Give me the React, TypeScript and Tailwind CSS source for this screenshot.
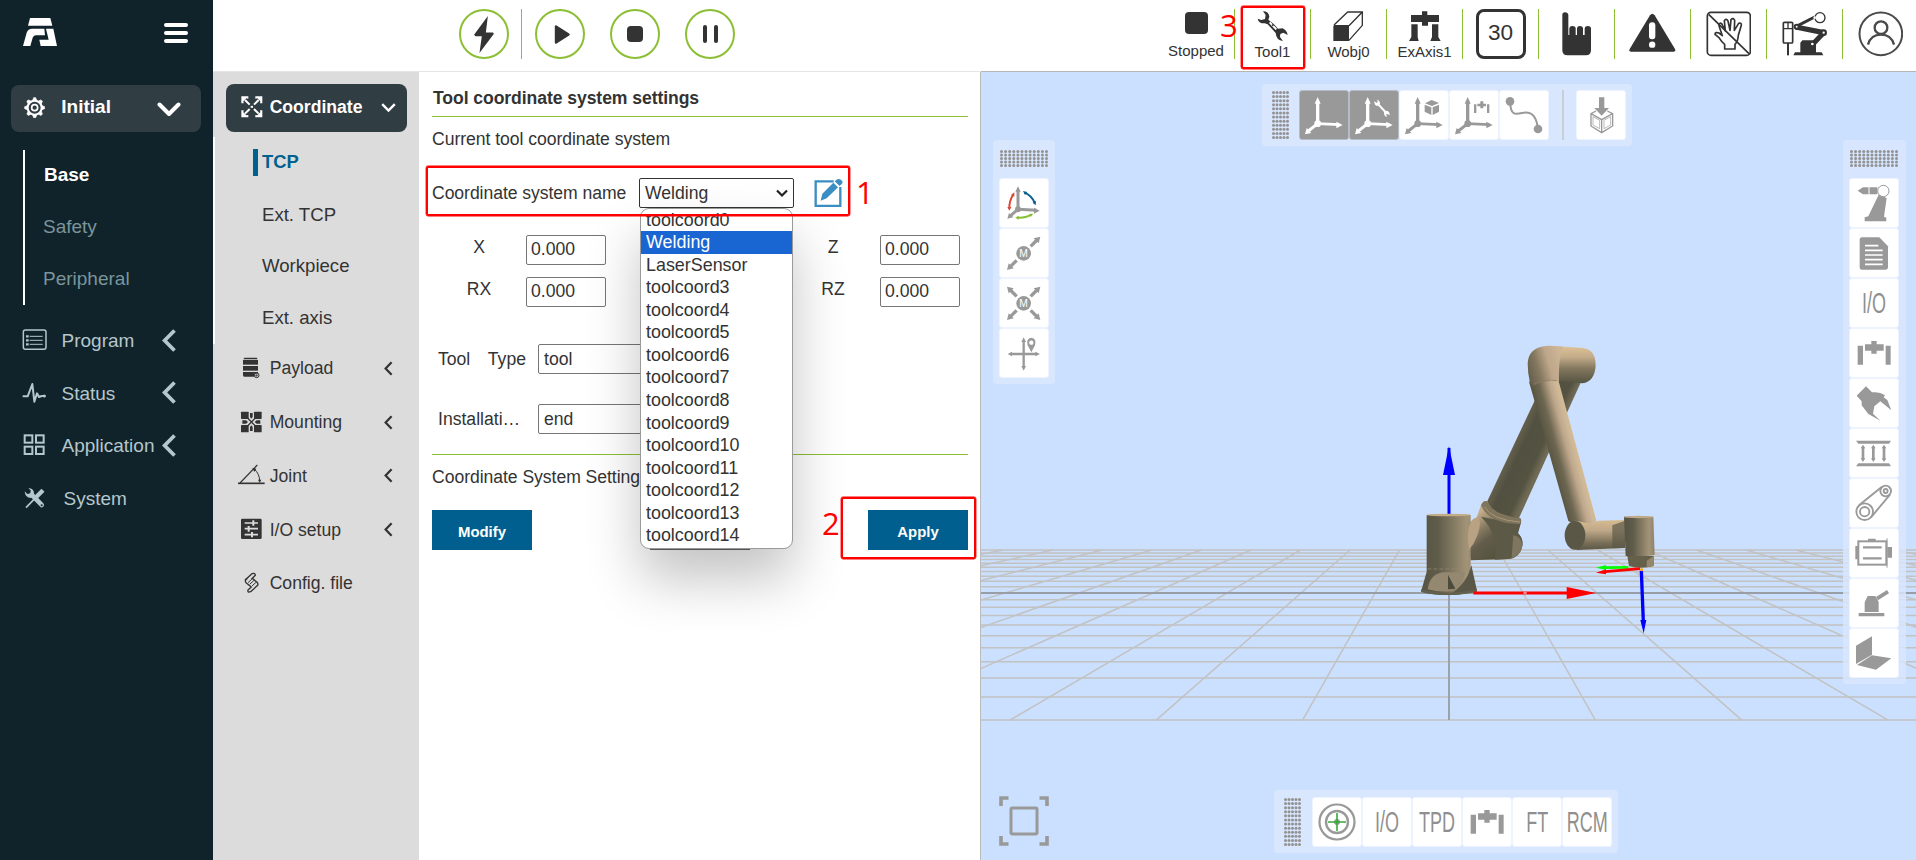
import React from "react";

type P = { children?: React.ReactNode };

const DARK = "#333333";
const GREY = "#999999";

function Ico({ box, className = "", children }: P & { box: [number, number, number, number]; className?: string }) {
  return (
    <svg className={`shrink-0 ${className}`} width={box[2] / 3} height={box[3] / 3} viewBox={box.join(" ")} fill="none">
      {children}
    </svg>
  );
}

/* ---------- navigation icons ---------- */

function Logo() {
  return (
    <Ico box={[69, 54, 102, 84]}>
      <g fill="#fff">
        <path d="M90 54H151L157 77H84Z" />
        <path d="M69 138L80 98Q84 86 97 86H133L135 106H108Q101 106 98 113L91 138Z" />
        <path d="M138 86H160L171 138H122L118 119H146Z" />
      </g>
    </Ico>
  );
}

function Gear() {
  return (
    <Ico box={[72, 290, 64, 64]}>
      <g stroke="#fff">
        <circle cx="104" cy="322" r="21" strokeWidth="6" />
        <circle cx="104" cy="322" r="9" strokeWidth="5" />
        {[0, 45, 90, 135, 180, 225, 270, 315].map((a) => (
          <path key={a} d="M98 300L101 292H107L110 300Z" fill="#fff" strokeWidth="2" transform={`rotate(${a} 104 322)`} />
        ))}
      </g>
    </Ico>
  );
}

const navIcons = {
  program: (
    <Ico box={[67, 89, 75, 65]}>
      <rect x="71" y="92" width="68" height="58" rx="6" stroke="#b5c7cd" strokeWidth="4.500" />
      <path d="M79 111H87M79 123H87M79 135H87" stroke="#b5c7cd" strokeWidth="7" />
      <path d="M90 111H129M90 123H129M90 135H129" stroke="#b5c7cd" strokeWidth="3" />
    </Ico>
  ),
  status: (
    <Ico box={[67, 248, 75, 65]}>
      <path d="M69 291H84L98 254L104 307L112 282L118 293L126 290H137" stroke="#b5c7cd" strokeWidth="6" strokeLinejoin="round" />
      <circle cx="134" cy="290" r="4.500" fill="#b5c7cd" />
    </Ico>
  ),
  application: (
    <Ico box={[67, 404, 75, 65]}>
      <g stroke="#b5c7cd" strokeWidth="6">
        <rect x="75" y="408" width="23" height="22" />
        <rect x="109" y="408" width="23" height="22" />
        <rect x="75" y="442" width="23" height="22" />
        <rect x="109" y="442" width="23" height="22" />
      </g>
    </Ico>
  ),
  system: (
    <Ico box={[67, 563, 75, 65]}>
      <path d="M98 588L126 617" stroke="#b5c7cd" strokeWidth="14" strokeLinecap="round" />
      <path d="M79 625L106 597" stroke="#b5c7cd" strokeWidth="5" />
      <path d="M103 600L130 573" stroke="#b5c7cd" strokeWidth="13" />
      <path d="M75 576L83 584L92 582L93 573L86 567Q98 566 102 576L104 590L94 596Q76 596 75 576Z" fill="#b5c7cd" />
      <circle cx="126" cy="618" r="3" fill="#10232a" />
    </Ico>
  ),
};

function ChevLeft({ small = false }: { small?: boolean }) {
  return small ? (
    <svg width="9" height="15" viewBox="0 0 9 15" fill="none">
      <path d="M7.6 1.2L1.6 7.5L7.6 13.8" stroke={DARK} strokeWidth="2.2" />
    </svg>
  ) : (
    <svg width="14" height="23" viewBox="0 0 14 23" fill="none">
      <path d="M12.5 1.5L2.6 11.5L12.5 21.5" stroke="#b5c7cd" strokeWidth="3.8" />
    </svg>
  );
}

function Sidebar() {
  const rows: [string, React.ReactNode, boolean][] = [
    ["Program", navIcons.program, true],
    ["Status", navIcons.status, true],
    ["Application", navIcons.application, true],
    ["System", navIcons.system, false],
  ];
  return (
    <nav className="flex h-full w-[213px] shrink-0 flex-col bg-[#10232a] text-[19px] text-[#b5c7cd]">
      <div className="flex h-[85px] items-start justify-between pl-[23px] pr-[25px] pt-[18px]">
        <Logo />
        <div className="mt-[5px] flex w-6 flex-col gap-1">
          <span className="h-1 rounded-full bg-white" />
          <span className="h-1 rounded-full bg-white" />
          <span className="h-1 rounded-full bg-white" />
        </div>
      </div>
      <div className="ml-[11px] flex h-[47px] w-[190px] items-center rounded-lg bg-[#303d43] pb-[2px] pl-[13px] font-bold text-white">
        <Gear />
        <span className="ml-[16px]">Initial</span>
        <svg className="ml-auto mr-[20px] mt-[4px]" width="24" height="15" viewBox="0 0 24 15" fill="none">
          <path d="M2.5 2.5L12 12L21.5 2.5" stroke="#fff" strokeWidth="4" strokeLinecap="round" strokeLinejoin="round" />
        </svg>
      </div>
      <div className="ml-[23px] mt-[18px] flex h-[155px] flex-col border-l-2 border-white pl-[18px] text-[#7b959d]">
        <div className="flex h-[52px] shrink-0 items-center pb-px pl-px font-bold text-white">Base</div>
        <div className="flex h-[52px] shrink-0 items-center pb-px">Safety</div>
        <div className="flex h-[52px] shrink-0 items-center pb-px">Peripheral</div>
      </div>
      <div className="mt-[9px] flex flex-col">
        {rows.map(([name, icon, more]) => (
          <div key={name} className="flex h-[52.5px] items-center pl-[22px] pr-[37px]">
            {icon}
            <span className={more ? "ml-[14.5px] pt-[2px]" : "ml-[16.5px] pt-[2px]"}>{name}</span>
            {more && <span className="ml-auto">{<ChevLeft />}</span>}
          </div>
        ))}
      </div>
    </nav>
  );
}

/* ---------- second level menu ---------- */

const menuIcons = {
  payload: (
    <Ico box={[714, 170, 80, 66]}>
      <g fill={DARK}>
        <path d="M733 172H770L773 177H730Z" />
        <rect x="729" y="179" width="45" height="14" />
        <rect x="729" y="197" width="45" height="14" />
        <path d="M729 215H774V219H764V229H733Q729 229 729 225Z" />
      </g>
      <circle cx="770" cy="225" r="7" stroke={DARK} strokeWidth="3" />
      <path d="M765 225H775M770 220V230" stroke={DARK} strokeWidth="2" />
    </Ico>
  ),
  mounting: (
    <Ico box={[714, 332, 80, 66]}>
      <g fill={DARK}>
        <rect x="723" y="334" width="23" height="22" rx="2" />
        <rect x="762" y="334" width="23" height="22" rx="2" />
        <rect x="723" y="374" width="23" height="22" rx="2" />
        <rect x="762" y="374" width="23" height="22" rx="2" />
        <path d="M750 338H758V350L754 355L750 350ZM750 392H758V380L754 375L750 380ZM727 360H738L744 365L738 370H727ZM781 360H770L764 365L770 370H781Z" />
      </g>
      <path d="M742 352L767 378M767 352L742 378" stroke={DARK} strokeWidth="4" />
    </Ico>
  ),
  joint: (
    <Ico box={[714, 494, 80, 66]}>
      <path d="M714 552H794" stroke={DARK} strokeWidth="5" />
      <path d="M720 551L772 497" stroke={DARK} strokeWidth="3.5" />
      <path d="M762 508Q780 525 779 547" stroke={DARK} strokeWidth="3" />
      <path d="M757 506L769 508L763 518ZM774 541H784L779 550Z" fill={DARK} />
    </Ico>
  ),
  io: (
    <Ico box={[714, 656, 80, 66]}>
      <rect x="723" y="658" width="62" height="61" rx="4" fill={DARK} />
      <path d="M734 671H774M734 688H774M734 706H774" stroke="#dcdcdc" strokeWidth="5" />
      <path d="M760 663V679M746 680V697M756 698V714" stroke="#dcdcdc" strokeWidth="6" />
    </Ico>
  ),
  config: (
    <Ico box={[714, 815, 80, 66]}>
      <g stroke={DARK} strokeWidth="4" strokeLinejoin="round" strokeLinecap="round">
        <path d="M741 835Q733 840 738 847L754 860L744 869Q742 878 752 874L773 855Q776 849 769 844L757 834" />
        <path d="M736 838L756 820Q766 817 766 825L755 836" />
        <path d="M745 846L754 838M750 851L761 841M757 856L767 847" strokeWidth="3" />
      </g>
    </Ico>
  ),
};

function SubMenu() {
  const rows: [string, React.ReactNode, boolean][] = [
    ["Payload", menuIcons.payload, true],
    ["Mounting", menuIcons.mounting, true],
    ["Joint", menuIcons.joint, true],
    ["I/O setup", menuIcons.io, true],
    ["Config. file", menuIcons.config, false],
  ];
  return (
    <nav className="flex w-[206px] shrink-0 flex-col bg-[#dcdcdc] text-[17.6px] text-[#333]">
      <div className="ml-[13px] mt-3 flex h-[48px] w-[181px] items-center rounded-lg bg-[#303d43] pb-0.5 pl-[15px] font-bold text-white">
        <Ico box={[722, 290, 65, 65]}>
          <path d="M734 302L748 316M775 302L761 316M734 343L748 329M775 343L761 329" stroke="#fff" strokeWidth="6" />
          <path
            d="M723 291H744V298L738 297L729 306L730 312H723ZM786 291H765V298L771 297L780 306L779 312H786ZM723 354H744V347L738 348L729 339L730 333H723ZM786 354H765V347L771 348L780 339L779 333H786Z"
            fill="#fff"
          />
          <path d="M751 322.500H758" stroke="#fff" strokeWidth="6" />
        </Ico>
        <span className="ml-[7px]">Coordinate</span>
        <svg className="ml-auto mr-[11px] mt-0.5" width="15" height="10" viewBox="0 0 15 10" fill="none">
          <path d="M1.2 1.2L7.5 7.6L13.8 1.2" stroke="#fff" strokeWidth="2.4" />
        </svg>
      </div>
      <div className="mt-[5px] flex h-[207px] flex-col border-l-2 border-white pl-[47px] text-[18.6px]">
        <div className="flex h-[51.75px] items-center text-[18.4px] font-bold text-[#00618f]">
          <span className="-ml-[9px] mr-[4px] h-[27px] w-[5px] bg-[#00618f]" />
          <span className="pb-[2px]">TCP</span>
        </div>
        <div className="flex h-[51.75px] items-center">Ext. TCP</div>
        <div className="flex h-[51.75px] items-center">Workpiece</div>
        <div className="flex h-[51.75px] items-center">Ext. axis</div>
      </div>
      <div className="flex flex-col">
        {rows.map(([name, icon, more]) => (
          <div key={name} className="flex h-[53.8px] items-center pb-[6px] pl-[25px] pr-[26.5px]">
            {icon}
            <span className="ml-[5px] pt-px">{name}</span>
            {more && <span className="ml-auto mt-px">{<ChevLeft small />}</span>}
          </div>
        ))}
      </div>
    </nav>
  );
}

/* ---------- top bar ---------- */

function Round({ children }: P) {
  return (
    <div className="flex h-[50px] w-[50px] items-center justify-center rounded-full border-2 border-[#8cbf34]">{children}</div>
  );
}

function Cell({ children, first = false }: P & { first?: boolean }) {
  return (
    <div className={`flex h-[50px] w-[76px] flex-col items-center ${first ? "" : "border-l border-[#8cbf34]"}`}>{children}</div>
  );
}

function TopBar() {
  return (
    <header className="flex h-[71px] items-start bg-white pt-[9px] text-[15px] text-[#333]">
      <div className="ml-[246px] flex items-center">
        <Round>
          <svg width="20" height="37" viewBox="193 47 59 110">
            <path d="M234 47L193 103L197 107H216L209 157L252 100L249 96H228Z" fill={DARK} />
          </svg>
        </Round>
        <span className="ml-3 mr-[13px] h-[50px] w-px bg-[#8cbf34]" />
        <Round>
          <svg className="ml-1" width="16" height="19" viewBox="0 0 16 19">
            <path d="M2 1.5L14.5 9.5L2 17.5Z" fill={DARK} stroke={DARK} strokeWidth="2.4" strokeLinejoin="round" />
          </svg>
        </Round>
        <span className="w-[25px]" />
        <Round>
          <span className="h-4 w-4 rounded-sm bg-[#333]" />
        </Round>
        <span className="w-[25px]" />
        <Round>
          <span className="flex gap-[7px]">
            <span className="h-[18px] w-1 rounded-full bg-[#333]" />
            <span className="h-[18px] w-1 rounded-full bg-[#333]" />
          </span>
        </Round>
      </div>
      <div className="-mr-[2px] ml-auto flex leading-[17px]">
        <Cell first>
          <span className="mt-[3px] h-[23px] w-[23px] rounded-[4px] bg-[#333]" />
          <span className="mt-[8px]">Stopped</span>
        </Cell>
        <Cell>
          <Ico box={[348, 32, 98, 93]} className="mt-[2px]">
            <path
              d="M369 33Q386 33 388 49L385 58L402 72L414 85L428 84Q441 90 443 104L430 97L421 101L420 110L429 122Q409 121 407 98L383 72L374 69Q356 70 353 55L364 59L375 56L377 44Z"
              fill={DARK}
            />
            <path d="M389 66L409 87" stroke="#fff" strokeWidth="6" />
            <circle cx="398" cy="75" r="3" fill={DARK} />
          </Ico>
          <span className="mt-px">Tool1</span>
        </Cell>
        <Cell>
          <Ico box={[580, 32, 93, 93]} className="mt-[2px]">
            <path d="M583 74L624 35H668V75L628 120M583 76H628M628 76L668 35" stroke={DARK} strokeWidth="4" />
            <rect x="581" y="76" width="47" height="46" fill={DARK} />
          </Ico>
          <span className="mt-px">Wobj0</span>
        </Cell>
        <Cell>
          <Ico box={[806, 32, 96, 93]} className="mt-[2px]">
            <path d="M812 44H845V33H861V44H896V65H863V76H845V65H812ZM813 72H832V110L835 122H806L813 110ZM875 72H894V110L901 122H870L875 110Z" fill={DARK} />
          </Ico>
          <span className="mt-px">ExAxis1</span>
        </Cell>
        <Cell>
          <span className="flex h-[50px] w-[50px] items-center justify-center rounded-lg border-[3px] border-[#333] pb-[3px] text-[22.6px]">
            30
          </span>
        </Cell>
        <Cell>
          <Ico box={[138, 35, 88, 131]} className="mt-[3px]">
            <path
              d="M139 44Q139 36 147 36Q156 36 157 44V104H160V84Q161 77 169 77Q178 77 179 84V104H183V84Q184 77 191 77Q200 77 201 84V104H206V84Q207 77 215 77Q224 77 225 84V150Q225 165 210 165H154Q139 165 139 150Z"
              fill={DARK}
            />
          </Ico>
        </Cell>
        <Cell>
          <Ico box={[340, 40, 140, 117]} className="mt-[4px]">
            <path d="M403 47Q410 37 417 47L478 148Q481 156 474 156H346Q339 156 342 148Z" fill={DARK} />
            <rect x="400" y="68" width="19" height="51" rx="9" fill="#fff" />
            <circle cx="409.500" cy="135" r="9.500" fill="#fff" />
          </Ico>
        </Cell>
        <Cell>
          <Ico box={[569, 32, 137, 137]} className="mt-[2px]">
            <g stroke={DARK} strokeWidth="5" strokeLinejoin="round">
              <rect x="573" y="36" width="129" height="129" rx="11" />
              <path d="M625 146V132Q615 124 608 112L596 102Q597 94 608 98L618 106L608 76Q609 65 616 70L627 92L624 61Q629 53 635 62L641 90L644 58Q651 51 655 60L654 90L667 69Q676 66 675 75L666 105Q665 124 656 132V146Z" strokeWidth="5" />
              <path d="M577 42L698 160" />
            </g>
          </Ico>
        </Cell>
        <Cell>
          <Ico box={[797, 32, 137, 136]} className="mt-[2px]">
            <g stroke={DARK} fill="none">
              <rect x="801" y="66" width="28" height="62" rx="3" strokeWidth="5" />
              <path d="M801 85H829M815 66V85" strokeWidth="4" />
              <path d="M815 128V165" strokeWidth="6" />
              <circle cx="911" cy="52" r="15" strokeWidth="4" />
              <path d="M840 78L895 50" strokeWidth="9" />
              <path d="M838 80L922 97" strokeWidth="16" />
              <path d="M922 97L890 131" strokeWidth="15" />
            </g>
            <g fill={DARK}>
              <path d="M831 165L836 156H916L921 165ZM852 156V127L858 120H893L899 132V156Z" />
              <circle cx="841" cy="79" r="9" />
              <circle cx="922" cy="97" r="10" />
            </g>
            <circle cx="922" cy="97" r="3.500" fill="#fff" />
            <circle cx="841" cy="79" r="3" fill="#fff" />
            <circle cx="888" cy="131" r="4" fill="#fff" />
            <circle cx="895" cy="52" r="4" fill="#fff" />
          </Ico>
        </Cell>
        <Cell>
          <Ico box={[1025, 32, 137, 137]} className="mt-[2px]">
            <g stroke="#4a4a4a" strokeWidth="6">
              <circle cx="1093.500" cy="100.500" r="64" />
              <circle cx="1094" cy="82" r="19" strokeWidth="7" />
              <path d="M1055 133Q1063 103 1094 103Q1125 103 1133 133" strokeWidth="7" />
            </g>
          </Ico>
        </Cell>
      </div>
    </header>
  );
}

/* ---------- settings panel ---------- */

function Field({ label, value }: { label: string; value: string }) {
  return (
    <div className="flex h-[42px] items-center">
      <span className="w-[94px] pb-[6px] text-center">{label}</span>
      <span className="flex h-[30px] w-[80px] items-center rounded-[2px] border border-[#767676] bg-white pb-0.5 pl-1">{value}</span>
    </div>
  );
}

const options = ["toolcoord0", "Welding", "LaserSensor", "toolcoord3", "toolcoord4", "toolcoord5", "toolcoord6", "toolcoord7", "toolcoord8", "toolcoord9", "toolcoord10", "toolcoord11", "toolcoord12", "toolcoord13", "toolcoord14"];

function Settings() {
  return (
    <section className="relative flex w-[562px] shrink-0 flex-col border-r border-[#bbb] bg-white px-[13px] text-[17.6px] text-[#333]">
      <h1 className="mr-[-1px] flex h-[45px] w-[536px] items-center border-b border-[#8cbf34] pt-2 font-bold">
        <span className="pl-px tracking-[-0.08px]">Tool coordinate system settings</span>
      </h1>
      <div className="flex h-[44px] items-center tracking-[-0.05px]">Current tool coordinate system</div>
      <div className="flex h-[64px] items-center">
        <span className="w-[207px] tracking-[-0.06px]">Coordinate system name</span>
        <span className="flex h-[30px] w-[155px] items-center justify-between rounded-[2px] border border-[#333] pl-[5px] pr-[5px]">
          Welding
          <svg width="12" height="9" viewBox="0 0 12 9" fill="none">
            <path d="M1 1.500L6 6.500L11 1.500" stroke="#222" strokeWidth="2.200" />
          </svg>
        </span>
        <Ico box={[1213, 536, 88, 86]} className="ml-[20px]">
          <path d="M1272 543H1218V617H1292V560" stroke="#3b8ec2" strokeWidth="7" />
          <path d="M1238 580L1271 547L1285 561L1251 594L1233 601ZM1275 543L1283 537Q1291 534 1298 543Q1300 548 1296 551L1290 557Z" fill="#3b8ec2" />
        </Ico>
      </div>
      <div className="mt-1 grid w-[531px] grid-cols-3">
        <Field label="X" value="0.000" />
        <span />
        <Field label="Z" value="0.000" />
        <Field label="RX" value="0.000" />
        <span />
        <Field label="RZ" value="0.000" />
      </div>
      <div className="mt-4 flex h-[60px] items-center">
        <span className="flex w-[94px] justify-between pl-[6px]">
          <span>Tool</span>
          <span>Type</span>
        </span>
        <span className="w-[12px] shrink-0" />
        <span className="flex h-[30px] w-[177px] items-center rounded-[2px] border border-[#767676] pl-[5px]">tool</span>
      </div>
      <div className="flex h-[60px] items-center">
        <span className="w-[106px] pl-[6px]">Installati…</span>
        <span className="flex h-[30px] w-[177px] items-center rounded-[2px] border border-[#767676] pl-[5px]">end</span>
      </div>
      <div className="mt-[5px] h-px w-[536px] bg-[#8cbf34]" />
      <div className="flex h-[44px] items-center tracking-[-0.05px]">Coordinate System Settings</div>
      <div className="mt-[11px] flex w-[536px] text-[14.9px] font-bold text-white">
        <button className="h-[40px] w-[100px] bg-[#005f8e] pt-[4px]">Modify</button>
        <span className="ml-[118px] h-[40px] w-[100px] bg-[#666]" />
        <button className="ml-auto h-[40px] w-[100px] bg-[#005f8e] pt-[4px]">Apply</button>
      </div>

      <div className="absolute left-[221px] top-[136px] flex h-[341px] w-[153px] flex-col justify-end overflow-hidden rounded-[9px] border border-[#9a9a9a] bg-white pb-px text-[17.9px] shadow-[0_30px_54px_rgba(0,0,0,0.24)]">
        {options.map((o) => (
          <div
            key={o}
            className={`flex h-[22.55px] shrink-0 items-center pl-[5px] ${o === "Welding" ? "bg-[#1966d3] text-white" : ""}`}
          >
            {o}
          </div>
        ))}
      </div>
    </section>
  );
}

/* ---------- 3D viewport ---------- */

const VX = 468;
const VH = 391;
const rowY = (z: number) => VH + 2631 / (20.24 - z);
const steps = Array.from({ length: 21 }, (_, i) => i - 10);

function Robot() {
  return (
    <g transform="translate(399 248) scale(0.33333)">
      <defs>
        <linearGradient id="base" x1="0" x2="1">
          <stop offset="0" stopColor="#565443" />
          <stop offset=".3" stopColor="#5f5c4a" />
          <stop offset=".82" stopColor="#a39478" />
          <stop offset="1" stopColor="#8f8269" />
        </linearGradient>
        <linearGradient id="back" gradientUnits="userSpaceOnUse" x1="385" y1="395" x2="480" y2="440">
          <stop offset="0" stopColor="#69634f" />
          <stop offset=".3" stopColor="#525141" />
          <stop offset=".8" stopColor="#545342" />
          <stop offset="1" stopColor="#706a54" />
        </linearGradient>
        <linearGradient id="front" gradientUnits="userSpaceOnUse" x1="500" y1="385" x2="592" y2="360">
          <stop offset="0" stopColor="#56543f" />
          <stop offset=".3" stopColor="#6e6752" />
          <stop offset=".62" stopColor="#bda68a" />
          <stop offset=".8" stopColor="#cdb799" />
          <stop offset="1" stopColor="#dcbe8e" />
        </linearGradient>
        <linearGradient id="top" x1="0" y1="0" x2="0" y2="1">
          <stop offset="0" stopColor="#dfc395" />
          <stop offset=".3" stopColor="#c4ac8a" />
          <stop offset=".6" stopColor="#84785f" />
          <stop offset="1" stopColor="#545342" />
        </linearGradient>
        <linearGradient id="elbow" gradientUnits="userSpaceOnUse" x1="443" y1="150" x2="545" y2="120">
          <stop offset="0" stopColor="#68614e" />
          <stop offset=".3" stopColor="#857960" />
          <stop offset=".62" stopColor="#bda68a" />
          <stop offset="1" stopColor="#cdb595" />
        </linearGradient>
        <linearGradient id="wrist" x1="0" y1="0" x2="0" y2="1">
          <stop offset="0" stopColor="#d6bb91" />
          <stop offset=".35" stopColor="#bfa888" />
          <stop offset=".75" stopColor="#7a7059" />
          <stop offset="1" stopColor="#5a5745" />
        </linearGradient>
        <linearGradient id="joint" gradientUnits="userSpaceOnUse" x1="270" y1="600" x2="350" y2="700">
          <stop offset="0" stopColor="#c4ad8b" />
          <stop offset=".35" stopColor="#857960" />
          <stop offset=".6" stopColor="#625d4b" />
          <stop offset="1" stopColor="#56543f" />
        </linearGradient>
      </defs>

      <path d="M207 384V585" stroke="#00f" strokeWidth="9" />
      <path d="M207 378L225 465H189Z" fill="#00f" />

      <path d="M465 240L540 165L602 188L418 592L410 606H345L318 552Z" fill="url(#back)" />
      <path d="M255 640Q270 595 290 592L303 556Q310 540 322 544Q335 585 420 594Q426 600 422 612L414 640Q430 655 427 678Q420 714 385 717L272 721Z" fill="url(#joint)" />
      <path d="M303 590L414 612L414 640Q430 655 427 678Q420 714 385 717L345 719Q355 640 303 590Z" fill="#5c5947" />
      <path d="M400 645Q428 650 426 682Q420 708 395 714Z" fill="#8a7d65" opacity=".8" />
      <path d="M303 556Q310 540 322 544Q335 585 420 594Q426 600 422 612Q345 612 312 572Z" fill="#7f745c" />
      <path d="M313 560Q335 600 420 606" stroke="#a99778" strokeWidth="3" fill="none" />

      <path d="M140 585H272V748L291 812Q240 826 207 825Q150 825 123 815L140 755Z" fill="url(#base)" />
      <path d="M264 655Q262 600 296 592Q308 620 280 672L266 690Z" fill="#b8a283" />
      <ellipse cx="206" cy="585" rx="66" ry="4" fill="#c4ac88" />
      <path d="M274 735L291 812Q255 824 210 824Q262 790 274 735Z" fill="#5a5746" />
      <path d="M143 808Q150 758 195 757H258L232 806Q200 822 143 808Z" fill="#958870" />
      <path d="M204 764L226 806L204 808Z" fill="#4b4a3b" />
      <path d="M142 747H272" stroke="#9c8e73" strokeWidth="2" strokeDasharray="12 6" />
      <path d="M123 808Q200 828 291 808V815Q200 835 123 815Z" fill="#63604d" />

      <path d="M510 77L610 84Q647 90 647 135Q645 185 607 190L530 182Z" fill="url(#top)" />
      <path d="M447 185L535 180L652 613Q600 625 565 603L462 238Z" fill="url(#front)" />
      <path d="M443 130Q445 80 505 77L550 80Q535 110 537 184Q490 180 462 198L450 190Q443 160 443 130Z" fill="url(#elbow)" />
      <path d="M462 192Q490 178 533 182" stroke="#8d8067" strokeWidth="2" fill="none" strokeDasharray="14 5" />

      <path d="M584 602L640 612L655 602L735 600V684L590 690Z" fill="url(#wrist)" />
      <path d="M697 616L735 602V684L697 685Z" fill="#5d5a48" opacity=".7" />
      <ellipse cx="585" cy="646" rx="31" ry="43" fill="#5a5746" />
      <path d="M732 590H820L824 705Q780 714 737 708Z" fill="url(#base)" />
      <path d="M742 708H821V738Q780 748 747 738Z" fill="#646049" />
      <path d="M800 722L821 708V738L800 742Z" fill="#95876c" />
      <ellipse cx="776" cy="591" rx="44" ry="3.500" fill="#c0a986" />

      <path d="M280 819H570" stroke="#f00" strokeWidth="9" />
      <path d="M560 801L648 819L560 837Z" fill="#f00" />
      <path d="M430 819H440" stroke="#f88" strokeWidth="7" />
      <path d="M676 743L745 742" stroke="#0f0" strokeWidth="8" />
      <path d="M648 743L678 735V750Z" fill="#0f0" />
      <path d="M676 755L780 746" stroke="#f00" strokeWidth="8" />
      <path d="M648 758L678 748V763Z" fill="#f00" />
      <path d="M784 752L790 905" stroke="#00f" strokeWidth="10" />
      <path d="M781 900H799L791 940Z" fill="#00f" />
      <circle cx="785" cy="749" r="5" fill="#f5a623" />
    </g>
  );
}

function Scene() {
  return (
    <svg className="absolute inset-0" width="935" height="788" viewBox="0 0 935 788">
      <g stroke="#c2c2c2" strokeWidth="1.500">
        {steps.map((z) => (
          <line key={`h${z}`} x1="-30" x2="965" y1={rowY(z)} y2={rowY(z)} />
        ))}
        {steps.map((n) => (
          <line
            key={`v${n}`}
            x1={VX + (n * 74 * (rowY(-10) - VH)) / 130}
            y1={rowY(-10)}
            x2={VX + (n * 74 * (rowY(10) - VH)) / 130}
            y2={rowY(10)}
          />
        ))}
      </g>
      <path d={`M0 ${rowY(0)}H935M${VX} ${rowY(-10)}V${rowY(10)}`} stroke="#999ea6" strokeWidth="1.800" />
      <Robot />
    </svg>
  );
}

function Grip({ tall = false }: { tall?: boolean }) {
  const cols = tall ? 5 : 12;
  const rows = tall ? 12 : 5;
  const w = tall ? 17 : 48;
  const h = tall ? 48 : 17;
  return (
    <svg width={w} height={h} className="shrink-0">
      {Array.from({ length: cols * rows }, (_, i) => (
        <circle
          key={i}
          cx={1.5 + ((i % cols) * (w - 3)) / (cols - 1)}
          cy={1.5 + (Math.floor(i / cols) * (h - 3)) / (rows - 1)}
          r="1.500"
          fill="#929292"
        />
      ))}
    </svg>
  );
}

function Tile({ children, active = false }: P & { active?: boolean }) {
  return (
    <div
      className={`flex h-[50px] w-[50px] shrink-0 items-center justify-center rounded-[3px] border ${
        active ? "border-[#b5bcc8] bg-[#999]" : "border-[#eef4ff] bg-white"
      }`}
    >
      {children}
    </div>
  );
}

function Word({ children }: P) {
  return <span className="inline-block scale-x-[0.6] text-[30px] leading-none text-[#8f8f8f]">{children}</span>;
}

function Axes({ color = GREY, children }: P & { color?: string }) {
  return (
    <Ico box={[0, 0, 144, 144]}>
      <g stroke={color} strokeWidth="10">
        <path d="M53 98V30" />
        <path d="M53 98L118 101" strokeWidth="8" />
        <path d="M53 98L25 120" strokeWidth="9" />
      </g>
      <g fill={color}>
        <circle cx="53" cy="98" r="10" />
        <path d="M53 18L62 38H44ZM128 102L109 112V92ZM15 130L20 111L34 126Z" />
      </g>
      {children}
    </Ico>
  );
}

function Gantry() {
  return (
    <Ico box={[80, 628, 104, 78]}>
      <path d="M82 645H98V702H82ZM166 645H181V702H166ZM104 641H123V631H139V641H160V660H139V669H123V660H104Z" fill={GREY} />
    </Ico>
  );
}

function Arrows({ cross = false }: { cross?: boolean }) {
  const angles = cross ? [0, 90, 180, 270] : [0, 180];
  return (
    <Ico box={[88, 446, 148, 146]}>
      {angles.map((a) => (
        <g key={a} transform={`rotate(${a} 162 519)`}>
          <path d="M183 498L202 479" stroke={GREY} strokeWidth="10" />
          <path d="M212 469L207 489L192 474Z" fill={GREY} />
        </g>
      ))}
      <circle cx="162" cy="519" r="22" fill={GREY} />
      <text x="162" y="530" textAnchor="middle" fontSize="31" fill="#fff" fontFamily="Liberation Sans, sans-serif">
        M
      </text>
    </Ico>
  );
}

function Viewport() {
  return (
    <main className="relative flex-1 overflow-hidden bg-[#cbe0fe]">
      <Scene />

      <div className="absolute left-[281px] top-[12px] flex h-[62px] w-[370px] items-center rounded bg-[#d9e7fe] pl-[10px]">
        <Grip tall />
        <div className="ml-[10px] flex">
          <Tile active>
            <Axes color="#fff" />
          </Tile>
          <Tile active>
            <Axes color="#fff">
              <path d="M83 38L109 66" stroke="#fff" strokeWidth="6" />
              <path
                d="M80 26Q91 28 90 40L82 45Q72 43 73 31L80 35L84 33ZM112 78Q101 76 102 64L110 59Q120 61 119 73L112 69L108 71Z"
                fill="#fff"
              />
            </Axes>
          </Tile>
          <Tile>
            <Axes>
              <path d="M75 37L95 27L117 36L96 45ZM74 41L94 49V72L74 62ZM98 49L117 41V62L98 72Z" fill={GREY} />
            </Axes>
          </Tile>
          <Tile>
            <Axes>
              <path d="M72 40H79V66H72ZM111 40H118V66H111ZM82 38H91V31H100V38H108V46H100V52H91V46H82Z" fill={GREY} />
            </Axes>
          </Tile>
          <Tile>
            <Ico box={[780, 47, 146, 146]}>
              <path d="M810 78C812 120 824 118 846 113C880 106 890 130 894 161" stroke={GREY} strokeWidth="6" />
              <circle cx="810" cy="78" r="13" fill={GREY} />
              <circle cx="894" cy="161" r="13" fill={GREY} />
            </Ico>
          </Tile>
        </div>
        <span className="ml-[13px] h-[50px] w-[2px] bg-[#c8cdd6]" />
        <span className="w-3" />
        <Tile>
          <Ico box={[1010, 47, 146, 146]}>
            <path d="M1076 66H1092V98H1106L1084 121L1062 98H1076Z" fill={GREY} />
            <path d="M1067 107L1052 115V152L1084 172L1117 152V115L1101 107M1052 115L1084 133L1117 115M1084 133V172" stroke={GREY} strokeWidth="4" />
            <path d="M1058 124L1078 135V160L1058 149ZM1111 124L1091 135V160L1111 149Z" stroke={GREY} strokeWidth="2" />
          </Ico>
        </Tile>
      </div>

      <div className="absolute left-[12px] top-[68px] flex h-[244px] w-[62px] flex-col items-center rounded bg-[#d9e7fe] pt-[10px]">
        <Grip />
        <div className="mt-[11px] flex flex-col">
          <Tile>
            <Ico box={[88, 145, 148, 146]}>
              <path d="M145 236V178M145 236L200 239" stroke={GREY} strokeWidth="9" />
              <path d="M145 236L122 256" stroke={GREY} strokeWidth="9" />
              <circle cx="145" cy="236" r="9" fill={GREY} />
              <path d="M145 167L153 183H137ZM210 240L193 249V231ZM113 264L118 247L131 260Z" fill={GREY} />
              <path d="M119 234Q118 212 131 191" stroke="#dc4733" strokeWidth="6" />
              <path d="M134 185V198L124 193ZM119 240L113 229H125Z" fill="#dc4733" />
              <path d="M164 186Q186 194 196 218" stroke="#0b6090" strokeWidth="6" />
              <path d="M160 181L173 184L166 193ZM198 224L189 216L199 211Z" fill="#0b6090" />
              <path d="M142 261Q166 263 186 251" stroke="#86c032" strokeWidth="6" />
              <path d="M137 261L147 255V267ZM191 249L183 259L179 250Z" fill="#86c032" />
            </Ico>
          </Tile>
          <Tile>
            <Arrows />
          </Tile>
          <Tile>
            <Arrows cross />
          </Tile>
          <Tile>
            <Ico box={[88, 597, 148, 146]}>
              <path d="M162 632V712M122 672H202" stroke={GREY} strokeWidth="7" />
              <path d="M162 622L169 636H155ZM162 722L155 708H169ZM114 672L127 665V679ZM211 672L197 665V679Z" fill={GREY} />
              <path d="M185 667L174 646Q168 626 185 623Q202 626 196 646Z" fill={GREY} />
              <circle cx="185" cy="638" r="6.500" fill="#fff" />
            </Ico>
          </Tile>
        </div>
      </div>

      <div className="absolute left-[862px] top-[68px] flex h-[544px] w-[63px] flex-col items-start rounded bg-[#d9e7fe]/80 pl-[6px] pt-[10px]">
        <div className="ml-px flex">
          <Grip />
        </div>
        <div className="mt-[11px] flex flex-col">
          <Tile>
            <Ico box={[58, 145, 148, 146]}>
              <path d="M105 272V260L116 257L147 192L171 202L163 258L170 261V272ZM84 180L100 170H143V191H100Z" fill={GREY} />
              <path d="M118 168V192" stroke="#fff" strokeWidth="3" />
              <circle cx="161" cy="181" r="17" fill="#fff" stroke={GREY} strokeWidth="3" />
            </Ico>
          </Tile>
          <Tile>
            <Ico box={[58, 295, 148, 146]}>
              <path d="M97 320H149L175 347V409Q175 417 167 417H97Q90 417 90 409V328Q90 320 97 320Z" fill={GREY} />
              <path d="M106 345H146M106 359H159M106 373H159M106 387H159M106 401H159" stroke="#fff" strokeWidth="5" />
            </Ico>
          </Tile>
          <Tile>
            <Word>I/O</Word>
          </Tile>
          <Tile>
            <Gantry />
          </Tile>
          <Tile>
            <Ico box={[58, 745, 148, 146]}>
              <path d="M81 795L109 767L127 785Q150 783 166 794L162 800L173 808L185 839L152 812L134 827L130 849L152 870L116 850L96 824V812Z" fill={GREY} />
            </Ico>
          </Tile>
          <Tile>
            <Ico box={[58, 56, 148, 146]}>
              <path d="M79 91H184L178 100H86ZM86 159H178L184 168H79Z" fill={GREY} />
              <path d="M100 110V148M131 110V148M163 110V148" stroke={GREY} strokeWidth="8" />
              <path d="M100 103L107 114H93ZM131 103L138 114H124ZM163 103L170 114H156ZM100 155L93 144H107ZM131 155L124 144H138ZM163 155L156 144H170Z" fill={GREY} />
            </Ico>
          </Tile>
          <Tile>
            <Ico box={[58, 207, 148, 146]}>
              <g stroke={GREY} strokeWidth="5.500">
                <circle cx="105" cy="305" r="25" />
                <circle cx="105" cy="305" r="14" />
                <circle cx="168" cy="243" r="16" />
                <circle cx="168" cy="243" r="6" />
                <path d="M88 286L157 230M124 322L181 254" />
              </g>
            </Ico>
          </Tile>
          <Tile>
            <Ico box={[58, 357, 148, 146]}>
              <rect x="86" y="394" width="84" height="70" stroke={GREY} strokeWidth="6" />
              <path d="M100 412H156M100 445H156" stroke={GREY} strokeWidth="7" />
              <path d="M172 385V473" stroke={GREY} strokeWidth="3" />
              <path d="M77 408H85V448H77ZM173 411H187V443H173ZM115 386H138V393H115Z" fill={GREY} />
            </Ico>
          </Tile>
          <Tile>
            <Ico box={[58, 507, 148, 146]}>
              <path d="M87 609H164V619H87ZM105 606V577L114 558H137L147 575V606Z" fill={GREY} />
              <path d="M142 566L175 545" stroke={GREY} strokeWidth="11" />
            </Ico>
          </Tile>
          <Tile>
            <Ico box={[58, 657, 148, 146]}>
              <path d="M79 707L127 679V734L79 762ZM82 765L127 736L185 745L139 779Z" fill={GREY} />
            </Ico>
          </Tile>
        </div>
      </div>

      <div className="absolute left-[18px] top-[724px]">
        <svg width="50" height="50" viewBox="0 0 50 50" fill="none">
          <path d="M2 10V2H9.500M40.500 2H48V10M2 40V48H9.500M40.500 48H48V40" stroke={GREY} strokeWidth="3.600" />
          <rect x="12" y="12" width="26" height="26" rx="1.500" stroke={GREY} strokeWidth="3" />
        </svg>
      </div>

      <div className="absolute left-[293px] top-[718px] flex h-[63px] w-[344px] items-center rounded bg-[#d9e7fe] pl-[10px]">
        <Grip tall />
        <div className="ml-[11px] flex">
          <Tile>
            <svg width="38" height="38" viewBox="0 0 38 38" fill="none">
              <circle cx="19" cy="19" r="17.500" stroke={GREY} strokeWidth="2.200" />
              <circle cx="19" cy="19" r="11" stroke={GREY} strokeWidth="2.400" />
              <circle cx="19" cy="19" r="3" fill={GREY} />
              <path d="M10 19H28M19 10V28" stroke="#35ab35" strokeWidth="1.600" />
            </svg>
          </Tile>
          <Tile>
            <Word>I/O</Word>
          </Tile>
          <Tile>
            <Word>TPD</Word>
          </Tile>
          <Tile>
            <Gantry />
          </Tile>
          <Tile>
            <Word>FT</Word>
          </Tile>
          <Tile>
            <Word>RCM</Word>
          </Tile>
        </div>
      </div>
    </main>
  );
}

export default function App() {
  return (
    <div className="relative flex h-[860px] w-[1916px] overflow-hidden bg-white font-['Liberation_Sans',Arial,sans-serif]">
      <Sidebar />
      <div className="flex flex-1 flex-col">
        <TopBar />
        <div className="flex h-px">
          <span className="w-[768px] bg-[#e6e6e6]" />
          <span className="flex-1 bg-[#b5b5b5]" />
        </div>
        <div className="flex flex-1">
          <SubMenu />
          <Settings />
          <Viewport />
        </div>
      </div>

      <div className="absolute left-[426px] top-[166px] h-[50px] w-[424px] rounded-[2px] border-2 border-[#f00] shadow-[0_0_0_0.4px_#f00]" />
      <div className="absolute left-[841px] top-[497px] h-[62px] w-[135px] rounded-[2px] border-2 border-[#f00] shadow-[0_0_0_0.4px_#f00]" />
      <div className="absolute left-[1241px] top-[6px] h-[63px] w-[64px] rounded-[2px] border-2 border-[#f00] shadow-[0_0_0_0.4px_#f00]" />
      <span className="absolute left-[856px] top-[176px] font-['Open_Sans',sans-serif] text-[31px] leading-8 text-[#f00]">1</span>
      <span className="absolute left-[822px] top-[507px] font-['Open_Sans',sans-serif] text-[31px] leading-8 text-[#f00]">2</span>
      <span className="absolute left-[1220px] top-[9px] font-['Open_Sans',sans-serif] text-[31px] leading-8 text-[#f00]">3</span>
    </div>
  );
}
